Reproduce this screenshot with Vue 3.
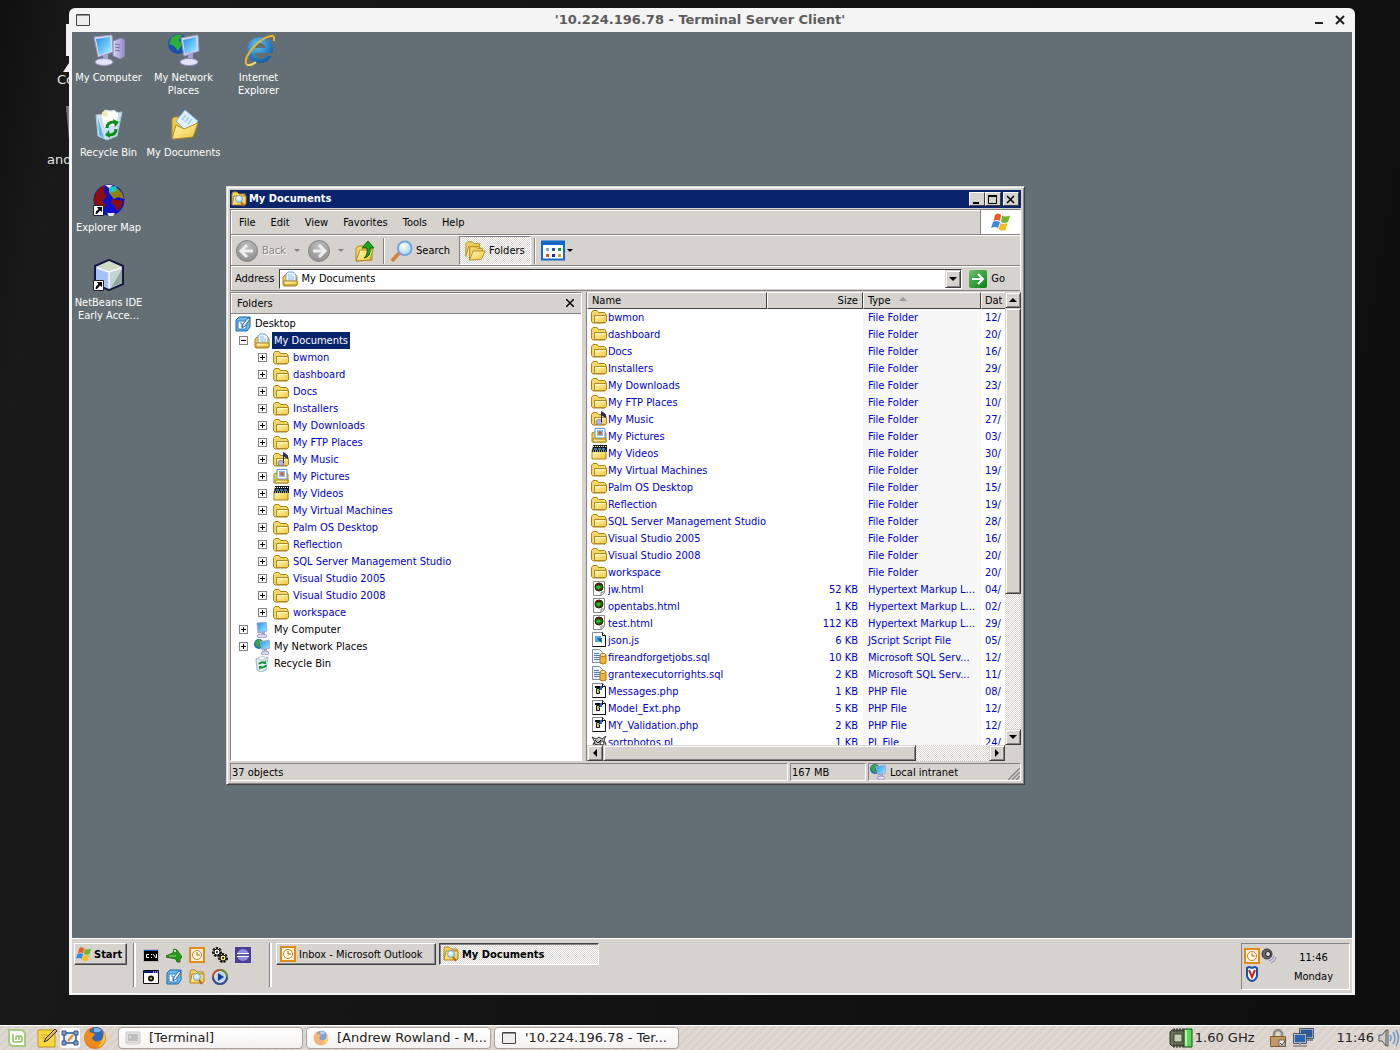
<template>
  <div class="screen">
    <svg class="sprite" aria-hidden="true">
      <defs>
        <linearGradient id="gold" x1="0" y1="0" x2="1" y2="1">
          <stop offset="0" stop-color="#fff9b8" />
          <stop offset="1" stop-color="#f0c53a" />
        </linearGradient>
        <linearGradient id="glass" x1="0" y1="0" x2="1" y2="1">
          <stop offset="0" stop-color="#1f8fe8" />
          <stop offset="1" stop-color="#a9f0ff" />
        </linearGradient>
        <linearGradient id="lilac" x1="0" y1="0" x2="1" y2="0">
          <stop offset="0" stop-color="#d9d6f2" />
          <stop offset="1" stop-color="#8d88c4" />
        </linearGradient>
        <radialGradient id="lens" cx="0.4" cy="0.35" r="0.7">
          <stop offset="0" stop-color="#ffffff" />
          <stop offset="1" stop-color="#9fd0f5" />
        </radialGradient>
        <radialGradient id="ieblue" cx="0.4" cy="0.3" r="0.8">
          <stop offset="0" stop-color="#5cc6f5" />
          <stop offset="1" stop-color="#0b4f9c" />
        </radialGradient>
        <radialGradient id="grayball" cx="0.5" cy="0.3" r="0.7">
          <stop offset="0" stop-color="#c2c2c2" />
          <stop offset="1" stop-color="#8e8e8e" />
        </radialGradient>
        <linearGradient id="goGreen" x1="0" y1="0" x2="1" y2="1">
          <stop offset="0" stop-color="#6cc46a" />
          <stop offset="1" stop-color="#0b7f16" />
        </linearGradient>
      </defs>

      <symbol id="i-folder" viewBox="0 0 16 16">
        <path d="M0.500 12.500v-9l1.500-2h4l1.500 2h6l1.500 1.500v8l-1 1H2z" fill="#f3d767" stroke="#a98316" />
        <path d="M3.500 13.500v-7h12v6l-1 1z" fill="url(#gold)" stroke="#b08a1e" />
        <path d="M5 7.500h9" stroke="#fffbd0" />
      </symbol>
      <symbol id="i-docs" viewBox="0 0 16 16">
        <path d="M1 14V6l2-2h11l1 2v8l-1 1H2z" fill="#f0cc54" stroke="#a98316" />
        <path d="M4 10V3l2-2h5l3 3v6z" fill="#eef7ff" stroke="#6da5d6" />
        <path d="M6 4h4M6 6h6M6 8h6" stroke="#8fc0ea" />
        <path d="M2 10h13v4H2z" fill="url(#gold)" stroke="#b08a1e" />
      </symbol>
      <symbol id="i-music" viewBox="0 0 16 16">
        <use href="#i-folder" />
        <ellipse cx="8" cy="11" rx="3" ry="2.5" fill="#b9b3dd" stroke="#8a85b8" />
        <path d="M10.500 11V0.500l4 3v3l-4-3" fill="#2b2b66" stroke="#2b2b66" />
      </symbol>
      <symbol id="i-pictures" viewBox="0 0 16 16">
        <path d="M1 14V5l2-1h11l1 1v9z" fill="#f0cc54" stroke="#a98316" />
        <path d="M4 0.500h10V10H4z" fill="#fff" stroke="#5f97c2" />
        <path d="M6 2h6v6H6z" fill="#7fc3ef" />
        <circle cx="9" cy="5" r="2" fill="#d9613a" />
        <path d="M2 11h13v3H2z" fill="url(#gold)" stroke="#b08a1e" />
      </symbol>
      <symbol id="i-videos" viewBox="0 0 16 16">
        <path d="M1 5h14v9H1z" fill="url(#gold)" stroke="#a98316" />
        <path d="M2 0h14v7H1z" fill="#15181c" />
        <path d="M2 1.500h13M2 6h13" stroke="#fff" stroke-dasharray="1 1" />
        <path d="M3 3h3v2H3zM7 3h3v2H7zM11 3h3v2h-3z" fill="#3f7c9c" />
      </symbol>
      <symbol id="i-desktop" viewBox="0 0 16 16">
        <path d="M1 4l3-3h11v10l-3 4H1z" fill="#6db7ee" stroke="#1a67ab" />
        <path d="M3 5h8v8H3z" fill="#fff" stroke="#2b7cc1" />
        <path d="M5 7h2v4" stroke="#2b7cc1" fill="none" />
        <path d="M7 12l1-4 5-6 2 1-5 7z" fill="#f3f8fc" stroke="#2368a2" />
        <path d="M14 6l2-1v3z" fill="#e28b2e" />
      </symbol>
      <symbol id="i-pc" viewBox="0 0 16 16">
        <path d="M3 1l9-1 1 9-9 2z" fill="url(#glass)" stroke="#a4a7c8" />
        <path d="M7 10l4-1v3l-3 1z" fill="#a9a5d2" />
        <ellipse cx="8" cy="14" rx="5" ry="2" fill="#dcdaf0" stroke="#9a97c4" />
      </symbol>
      <symbol id="i-net" viewBox="0 0 16 16">
        <circle cx="5" cy="5" r="5" fill="#1b6fc2" />
        <path d="M1 3l4-3 3 2-3 3 1 4-4-2z" fill="#37a93b" />
        <path d="M6 3l9-2 1 8-8 2z" fill="url(#glass)" stroke="#a4a7c8" />
        <path d="M10 10l3-1v3h-3z" fill="#a9a5d2" />
        <ellipse cx="11" cy="14" rx="4" ry="2" fill="#dcdaf0" stroke="#9a97c4" />
      </symbol>
      <symbol id="i-bin" viewBox="0 0 16 16">
        <path d="M2 3l12-2-2 13-5 2-4-2z" fill="#dcecf4" stroke="#9cb8c8" />
        <path d="M4 2l4-2 5 2-6 2z" fill="#fff" stroke="#b9c8d0" />
        <path d="M5 8a4 3 0 0 1 6-1M12 9a4 3 0 0 1-6 2" stroke="#17962a" stroke-width="2" fill="none" />
        <path d="M12 4v4H9zM5 14v-4h3z" fill="#17962a" />
      </symbol>
      <symbol id="i-html" viewBox="0 0 16 16">
        <path d="M2.500 0.500h11v11l-3 3h-8z" fill="#fff" stroke="#888" />
        <path d="M13 11h-3v4" fill="#ddd" stroke="#888" />
        <circle cx="8" cy="6" r="4" fill="#0d7a12" stroke="#3a1208" />
        <path d="M6 3h5L7 6zM8 8l3-1-1 2z" fill="#6b0f0a" />
        <path d="M5 6l3-2 2 3-3 1z" fill="#2fc026" />
      </symbol>
      <symbol id="i-js" viewBox="0 0 16 16">
        <path d="M1.500 0.500h10l3 3v11h-13z" fill="#fff" stroke="#888" />
        <path d="M11.500 0.500v3h3v11h-13" fill="none" stroke="#111" />
        <path d="M4 4h6v6H4z" fill="#56a9dd" />
        <path d="M6 6h5v5L8 9z" fill="#1f6db0" />
      </symbol>
      <symbol id="i-sql" viewBox="0 0 16 16">
        <path d="M1.500 0.500h7l3 3v10h-10z" fill="#eef3fb" stroke="#7a8ba8" />
        <path d="M3 4.500h5M3 6.500h6M3 8.500h6M3 10.500h6" stroke="#5878b4" />
        <path d="M9 6v8q3 2 6 0V6z" fill="#f2b632" stroke="#a87a18" />
        <ellipse cx="12" cy="6" rx="3" ry="1.500" fill="#fff0b8" stroke="#a87a18" />
      </symbol>
      <symbol id="i-php" viewBox="0 0 16 16">
        <path d="M1.500 0.500h10l3 3v11h-13z" fill="#fff" stroke="#888" />
        <path d="M11.500 0.500v3h3v11h-13" fill="none" stroke="#111" />
        <path d="M4 3h8v2H4z" fill="#111" />
        <path d="M9 3h2v4H9z" fill="#2a62e0" />
        <path d="M5.500 5.500h3v5h-3z" fill="#e9c94a" stroke="#111" />
        <path d="M7 7h2v1H7z" fill="#15a6b8" />
      </symbol>
      <symbol id="i-pl" viewBox="0 0 16 16">
        <path d="M1 3l4 2 3-2 3 2 4-3-2 4 2 4-2 5H3L1 12l3-4z" fill="#c9c9c9" stroke="#333" />
        <path d="M4 6l3 3 3-3M5 11h6M2 9l4 2" stroke="#111" fill="none" />
        <circle cx="11" cy="9" r="2" fill="#fff" stroke="#222" />
      </symbol>
      <symbol id="i-searchfolder" viewBox="0 0 16 16">
        <path d="M1 13V3l1-2h4l2 2h6v3" fill="#f3d767" stroke="#b5831a" />
        <path d="M1 14l2-9h12v8l-2 1z" fill="url(#gold)" stroke="#b5831a" />
        <circle cx="8" cy="8" r="3.500" fill="url(#lens)" stroke="#7da7c9" />
        <path d="M10 11l3 4" stroke="#b5651c" stroke-width="2" />
      </symbol>
      <symbol id="i-flag" viewBox="0 0 20 20">
        <path d="M4 3q3-3 6 0L9 9Q6 7 2.500 9z" fill="#ec5a24" />
        <path d="M11 3.500q3 2 8 0L17 10q-4 2-7 0z" fill="#6fb52c" />
        <path d="M2 10q3-2 7 0L7 16q-3-2-7 0z" fill="#3f86e0" />
        <path d="M9.500 11q3 2 7 0l-2 7q-4 2-7-1z" fill="#f8bd1d" />
      </symbol>
      <symbol id="i-clock" viewBox="0 0 16 16">
        <path d="M1 1h14v14H1z" fill="#fdf3dc" stroke="#e08c1a" stroke-width="2" />
        <circle cx="8" cy="8" r="4.500" fill="#fff8e6" stroke="#c98220" />
        <path d="M8 5v3h3" fill="none" stroke="#b0680c" />
      </symbol>
      <symbol id="i-cmd" viewBox="0 0 16 16">
        <path d="M0.500 2.500h15v12h-15z" fill="#000" stroke="#b8b8b8" />
        <path d="M1 3h14v1H1z" fill="#2458c8" />
        <path d="M6 7.500H3.500v3H6M8.500 7v1M8.500 10v1M10 7l3 4M13.500 7v4" stroke="#fff" fill="none" />
      </symbol>
      <symbol id="i-croc" viewBox="0 0 16 16">
        <path d="M0 9l7-3 1-4 3 1 2 3 3 4-2 2v3h-3l-1-3-5-1-5-1z" fill="#1f9a1d" stroke="#2c6a14" />
        <circle cx="9" cy="4" r="1" fill="#fff" />
        <path d="M3 9h7" stroke="#9fd070" />
      </symbol>
      <symbol id="i-gears" viewBox="0 0 16 16">
        <circle cx="5" cy="5" r="3.500" fill="#fff" stroke="#111" stroke-width="3" stroke-dasharray="2 1" />
        <circle cx="11" cy="11" r="3.500" fill="#f2ef6a" stroke="#111" stroke-width="3" stroke-dasharray="2 1" />
        <circle cx="5" cy="5" r="3" fill="#fff" stroke="#111" />
        <circle cx="11" cy="11" r="3" fill="#f2ef6a" stroke="#111" />
        <circle cx="5" cy="5" r="1" />
        <circle cx="11" cy="11" r="1" />
      </symbol>
      <symbol id="i-eclipse" viewBox="0 0 16 16">
        <path d="M0 0h16v16H0z" fill="#4a3c98" />
        <circle cx="8" cy="8" r="6" fill="#8f8fd6" />
        <path d="M2 6.500h12M2 9.500h12" stroke="#fff" />
        <path d="M2 8h12" stroke="#35287c" />
      </symbol>
      <symbol id="i-svcs" viewBox="0 0 16 16">
        <path d="M0.500 1.500h15v13h-15z" fill="#fff" stroke="#111" />
        <path d="M1 2h14v2H1z" fill="#0a1a80" />
        <path d="M10 3h1M12 3h1M14 3h1" stroke="#fff" />
        <circle cx="8" cy="9.500" r="2" fill="#f0e23a" stroke="#111" stroke-width="2" />
      </symbol>
      <symbol id="i-media" viewBox="0 0 16 16">
        <circle cx="8" cy="8" r="7" fill="#e8eef8" stroke="#b24a2c" stroke-width="2" />
        <path d="M8 1a7 7 0 0 1 7 7" fill="none" stroke="#5c9a35" stroke-width="2" />
        <path d="M15 8a7 7 0 0 1-14 0" fill="none" stroke="#27549c" stroke-width="2" />
        <circle cx="8" cy="8" r="5" fill="#b9d4f4" />
        <path d="M6 4l6 4-6 4z" fill="#123c9c" />
      </symbol>
      <symbol id="i-speaker" viewBox="0 0 16 16">
        <circle cx="6" cy="6" r="5" fill="#666" stroke="#333" />
        <circle cx="7" cy="6" r="2.500" fill="#ddd" stroke="#222" />
        <path d="M8 13q4-1 5-5M10 15q5-2 5-6" stroke="#8c86d8" fill="none" />
      </symbol>
      <symbol id="i-shield" viewBox="0 0 16 16">
        <path d="M3 2l2-1 3 1 3-1 2 1v8q-1 4-5 5-4-1-5-5z" fill="#fff" stroke="#1c4fa8" stroke-width="2" />
        <path d="M5 4l3 7 3-7" fill="none" stroke="#cc1f1f" stroke-width="2" />
      </symbol>
      <symbol id="i-firefox" viewBox="0 0 22 22">
        <circle cx="11" cy="11" r="10" fill="#e8751a" />
        <circle cx="12" cy="8" r="7" fill="#3467b4" />
        <path d="M10 2q4-1 7 2-3 3-7 1z" fill="#7fb8ea" />
        <path d="M1 9q1-4 4-7 0 3 2 4 3 0 4 2l-3 3q2 4 6 3 3-1 5-3 0 6-6 9-9 0-12-8z" fill="#ef8a1d" />
        <path d="M19 5q3 6 0 11-2 3-6 4 6-6 6-15z" fill="#f7c832" />
      </symbol>
      <symbol id="i-window" viewBox="0 0 16 14">
        <path d="M1.500 1.500h13v11h-13z" fill="#eee" stroke="#444" />
        <path d="M2 2.500h12" stroke="#8a8f94" />
      </symbol>
      <symbol id="i-term" viewBox="0 0 16 16">
        <path d="M1 2h14v11H1z" fill="#d4d4d4" stroke="#a9a9a9" />
        <path d="M3 4h10v7H3z" fill="#9a9a9a" />
        <path d="M4 6l2 1-2 1M2 14.500h12" fill="none" stroke="#d5d5d5" />
      </symbol>
      <symbol id="i-mint" viewBox="0 0 20 20">
        <path d="M2 2h11q5 0 5 5v11H7q-5 0-5-5z" fill="#fff" stroke="#a5cc7c" stroke-width="2" />
        <path d="M6 6v6q0 2 2 2h5q2 0 2-2V9q0-1-1.500-1T12 9v3M12 9q0-1-1.500-1T9 9v3" fill="none" stroke="#8dbf5c" stroke-width="1.500" />
      </symbol>
      <symbol id="i-note" viewBox="0 0 20 20">
        <path d="M1 2h17v17H1z" fill="#f6d83a" stroke="#bb9a16" />
        <path d="M4 7h7M4 10h5" stroke="#c8aa2a" />
        <path d="M7 14l2-4 9-9 2 2-9 9z" fill="#e7b06a" stroke="#333" />
      </symbol>
      <symbol id="i-showdesk" viewBox="0 0 20 20">
        <path d="M4 5h12v10H4z" fill="#eee" stroke="#2f5687" stroke-width="1.500" />
        <path d="M2 3h4v4H2zM14 3h4v4h-4zM2 13h4v4H2zM14 13h4v4h-4z" fill="#7ba0cf" stroke="#2f5687" />
        <path d="M8 13l5-6" stroke="#d98f32" stroke-width="2" />
      </symbol>

      <symbol id="b-pc" viewBox="0 0 32 32">
        <path d="M20 7l8-3 4 2v16l-5 3-7-3z" fill="url(#lilac)" stroke="#8581b8" />
        <path d="M22 10l5 1M22 13l5 1M22 16l5 1" stroke="#6f6aa8" />
        <path d="M1 3l18-2 1 17-15 5z" fill="#d8d8ee" stroke="#9a9ac4" />
        <path d="M3 5l14-2 1 14-12 4z" fill="url(#glass)" />
        <path d="M10 21l5-2v6h-5z" fill="#a5a1d0" />
        <ellipse cx="11" cy="28" rx="9" ry="3.500" fill="#e4e2f6" stroke="#9793c4" />
      </symbol>
      <symbol id="b-net" viewBox="0 0 32 32">
        <circle cx="10" cy="10" r="10" fill="#1550b0" />
        <path d="M3 4q5-5 11-3l-3 5 3 5-4 6-4-5-5-2z" fill="#2fae35" />
        <path d="M13 4l17-3 1 16-15 5z" fill="#d8d8ee" stroke="#9a9ac4" />
        <path d="M15 6l13-3 1 13-12 4z" fill="url(#glass)" />
        <path d="M20 20l5-2v6h-5z" fill="#a5a1d0" />
        <ellipse cx="21" cy="28" rx="9" ry="3.500" fill="#e4e2f6" stroke="#9793c4" />
      </symbol>
      <symbol id="b-ie" viewBox="0 0 32 32">
        <circle cx="17" cy="16" r="13" fill="url(#ieblue)" />
        <path d="M12 14q1-5 5-5t6 5z" fill="#636f74" />
        <path d="M12 19h19v3h-7q-2 3-6 3-5 0-6-6z" fill="#636f74" />
        <path d="M4 31q-4-5 5-16T28 2q4-1 3 5" fill="none" stroke="#e9b62c" stroke-width="2" />
        <path d="M4 31q4 1 9-3" fill="none" stroke="#f5dc6a" stroke-width="2" />
      </symbol>
      <symbol id="b-bin" viewBox="0 0 32 32">
        <path d="M3 6l26-3-5 24-10 4-9-4z" fill="#c9e2f2" stroke="#a7c3d6" />
        <path d="M8 7l4-6 6 1 3-1 5 4-3 12-12 2z" fill="#fdfdfd" stroke="#cfd6da" />
        <path d="M9 3l5-2 1 6-5 1z" fill="#f6edb2" />
        <path d="M5 9l6 20-5-3z" fill="#5fb3ee" />
        <path d="M14 19q0-6 7-6M23 20q0 6-7 6" fill="none" stroke="#0e8b1e" stroke-width="3" />
        <path d="M20 10l6 3-4 5zM17 29l-5-3 4-5z" fill="#0e8b1e" />
      </symbol>
      <symbol id="b-docs" viewBox="0 0 32 32">
        <path d="M4 28V10l2-2h6l2 3h12v4z" fill="#f0c850" stroke="#b88c22" />
        <path d="M8 12L17 1l13 11-9 13z" fill="#dff1fd" stroke="#7fb2dc" />
        <path d="M14 11l4-5M17 13l4-5M20 15l4-5" stroke="#a5d0f0" stroke-width="2" />
        <path d="M4 30l4-14 8 4 14-6-5 14-19 2z" fill="url(#gold)" stroke="#b88c22" />
      </symbol>
      <symbol id="b-map" viewBox="0 0 32 32">
        <circle cx="16" cy="16" r="15.500" fill="#1010c8" />
        <path d="M3 8q4-6 9-6l-1 6 3 4-5 5 4 4-4 6Q-1 22 1 13z" fill="#8c0d10" />
        <path d="M16 3l8 1q6 4 7 11l-6-2-4 2-5-6z" fill="#8f8212" />
        <path d="M19 15l11 2q-1 7-6 10l-2-5-4-3z" fill="#8c0d10" />
        <path d="M16 3l7-1 1 4-5 3-3-2z" fill="#22c9b0" />
        <path d="M12 1h8l-4 3zM14 29h8l-2 3h-4z" fill="#e8e8f8" />
      </symbol>
      <symbol id="b-cube" viewBox="0 0 32 32">
        <path d="M16 1l14 6v18l-14 6L2 25V7z" fill="#b7cdf0" stroke="#15173d" stroke-width="2" />
        <path d="M16 2l13 6-13 5L3 8z" fill="#cfdcc4" />
        <path d="M3 8l13 5v17L3 24z" fill="#a6c2f4" />
        <path d="M16 13l13-5v16l-13 6z" fill="#c3d3d8" />
        <path d="M18 29L29 10v14z" fill="#93a89f" />
        <path d="M16 13v16M4 9l12 4 12-4" stroke="#f4f8ff" stroke-width="1.500" fill="none" />
      </symbol>
      <symbol id="i-shortcut" viewBox="0 0 11 11">
        <path d="M0.500 0.500h10v10h-10z" fill="#fff" stroke="#222" />
        <path d="M4 2h5v5L7 5.500 4 9 2.500 9 3 6.500 5.500 4z" fill="#000" />
      </symbol>
    </svg>

    <main class="host-desktop">
      <div class="host-icon">
        <svg viewBox="0 0 30 48"><path d="M3 0h27v32H3zM8 36h22v12H0z" fill="#eee" /></svg>
        <span>Co</span>
      </div>
      <div class="host-icon second">
        <svg viewBox="0 0 30 48"><path d="M3 2h27v34H6z" fill="#777" /></svg>
        <span>and</span>
      </div>

      <section class="remote">
        <header class="remote-title">
          <svg class="win-icon"><use href="#i-window" /></svg>
          <h1>'10.224.196.78 - Terminal Server Client'</h1>
          <button class="wm-btn" aria-label="Minimize"><svg viewBox="0 0 10 10"><path d="M1 8h8" stroke="#222" stroke-width="2" /></svg></button>
          <button class="wm-btn" aria-label="Close"><svg viewBox="0 0 10 10"><path d="M1 1l8 8M9 1l-8 8" stroke="#222" stroke-width="2" /></svg></button>
        </header>

        <div class="remote-desktop">
          <div v-for="(row, r) in desktopRows" :key="r" class="shortcut-row">
            <button v-for="item in row" :key="item.label" class="shortcut">
              <span class="shortcut-icon">
                <svg><use :href="'#' + item.icon" /></svg>
                <svg v-if="item.link" class="overlay"><use href="#i-shortcut" /></svg>
              </span>
              <span>{{ item.label }}</span>
            </button>
          </div>

          <section class="explorer">
            <header class="ex-title">
              <svg class="ic"><use href="#i-searchfolder" /></svg>
              <h2>My Documents</h2>
              <button class="cap-btn" aria-label="Minimize"><svg viewBox="0 0 10 9"><path d="M1 8h6" stroke="#000" stroke-width="2" /></svg></button>
              <button class="cap-btn" aria-label="Maximize"><svg viewBox="0 0 10 9"><path d="M0.500 0v8.500h8V0" stroke="#000" fill="none" /><path d="M0 1h9" stroke="#000" stroke-width="2" /></svg></button>
              <button class="cap-btn close" aria-label="Close"><svg viewBox="0 0 10 9"><path d="M1 1l7 7M8 1L1 8" stroke="#000" stroke-width="1.500" /></svg></button>
            </header>

            <div class="bars">
              <nav class="menu">
                <button v-for="m in menus" :key="m">{{ m }}</button>
                <span class="throbber"><svg><use href="#i-flag" /></svg></span>
              </nav>

              <div class="tools">
                <button class="tool off">
                  <svg class="big" viewBox="0 0 22 22"><circle cx="11" cy="11" r="10.500" fill="url(#grayball)" stroke="#868686" /><path d="M17 11H6M11 5l-6 6 6 6" fill="none" stroke="#eee" stroke-width="3" /></svg>
                  Back
                </button>
                <i class="caret off"></i>
                <button class="tool off fwd" aria-label="Forward">
                  <svg class="big" viewBox="0 0 22 22"><circle cx="11" cy="11" r="10.500" fill="url(#grayball)" stroke="#868686" /><path d="M5 11h11M11 5l6 6-6 6" fill="none" stroke="#eee" stroke-width="3" /></svg>
                </button>
                <i class="caret off"></i>
                <button class="tool up" aria-label="Up">
                  <svg class="big" viewBox="0 0 22 22"><path d="M1 21V8l3-2h5l2 2h6v12z" fill="#f3d767" stroke="#b08a1e" /><path d="M1 21l4-11h13l-3 10z" fill="url(#gold)" stroke="#b08a1e" /><path d="M9 18q4-3 3-10H7l6-7 6 7h-4q1 9-6 10z" fill="#22a322" stroke="#0c6a10" /></svg>
                </button>
                <i class="sep"></i>
                <button class="tool search">
                  <svg class="big wide" viewBox="0 0 24 24"><path d="M1 23l9-10" stroke="#d9803a" stroke-width="4" /><circle cx="15" cy="9" r="7.500" fill="url(#lens)" stroke="#6c9fdc" stroke-width="2" /></svg>
                  Search
                </button>
                <button class="tool pressed">
                  <svg class="big wide" viewBox="0 0 24 24"><path d="M2 18V4l2-2h5l2 2h6v3" fill="#f0d060" stroke="#b08a1e" /><path d="M2 18l3-11h12v4" fill="#ffe98a" stroke="#b08a1e" /><path d="M6 22V8l2-1h4l2 2h6v4" fill="#f0d060" stroke="#b08a1e" /><path d="M6 22l4-10h13l-4 9z" fill="url(#gold)" stroke="#b08a1e" /></svg>
                  Folders
                </button>
                <i class="sep"></i>
                <button class="tool views" aria-label="Views">
                  <svg class="big wide" viewBox="0 0 24 22"><path d="M1 1.500h22v18H1z" fill="#fff" stroke="#1568c8" stroke-width="2" /><path d="M1 2h22v3H1z" fill="#1568c8" /><path d="M5 8h3v3H5z" fill="#8aa2e0" /><path d="M11 8h3v3h-3z" fill="#3454b4" /><path d="M17 8h3v3h-3z" fill="#1f9a3c" /><path d="M5 14h3v3H5z" fill="#d9543a" /><path d="M11 14h3v3h-3z" fill="#1b2f8c" /><path d="M17 14h3v3h-3z" fill="#c9a12a" /></svg>
                </button>
                <i class="caret"></i>
              </div>

              <div class="address">
                <label for="address">Address</label>
                <div class="addr-box">
                  <svg class="ic"><use href="#i-docs" /></svg>
                  <input id="address" type="text" v-model="address" />
                  <button class="sb-btn" aria-label="Show addresses"><i class="arrow down"></i></button>
                </div>
                <button class="go">
                  <svg viewBox="0 0 18 18"><rect width="18" height="18" rx="2" fill="url(#goGreen)" /><path d="M3 9h11M9 4l5 5-5 5" fill="none" stroke="#fff" stroke-width="2" /></svg>
                  Go
                </button>
              </div>
            </div>

            <div class="panes">
              <aside class="folders">
                <header>
                  <span>Folders</span>
                  <button aria-label="Close folders"><svg viewBox="0 0 8 8"><path d="M0 0l8 8M8 0L0 8" stroke="#000" stroke-width="1.500" /></svg></button>
                </header>
                <ul>
                  <li v-for="n in tree" :key="n.label" :class="'lv' + n.level">
                    <button v-if="n.sign" class="sign" :aria-label="n.sign === '+' ? 'Expand' : 'Collapse'">
                      <svg viewBox="0 0 9 9"><path d="M2 4.500h5" stroke="#000" /><path v-if="n.sign === '+'" d="M4.500 2v5" stroke="#000" /></svg>
                    </button>
                    <svg class="ic"><use :href="'#' + n.icon" /></svg>
                    <a href="#" :class="{ blue: n.level === 2, selected: n.selected }">{{ n.label }}</a>
                  </li>
                </ul>
              </aside>

              <div class="listing">
                <div class="list-view">
                  <table>
                    <thead>
                      <tr>
                        <th class="c-name">Name</th>
                        <th class="c-size">Size</th>
                        <th class="c-type">Type<i class="arrow up sorted"></i></th>
                        <th>Dat</th>
                      </tr>
                    </thead>
                    <tbody>
                      <tr v-for="f in files" :key="f.name">
                        <td><span class="file"><svg class="ic"><use :href="'#' + f.icon" /></svg><a href="#">{{ f.name }}</a></span></td>
                        <td class="size">{{ f.size }}</td>
                        <td class="type">{{ f.type }}</td>
                        <td>{{ f.date }}</td>
                      </tr>
                    </tbody>
                  </table>
                </div>
                <div class="scroll vert">
                  <button class="sb-btn" aria-label="Scroll up"><i class="arrow up"></i></button>
                  <div class="track"><div class="thumb"></div></div>
                  <button class="sb-btn" aria-label="Scroll down"><i class="arrow down"></i></button>
                </div>
                <div class="scroll horz">
                  <button class="sb-btn" aria-label="Scroll left"><i class="arrow left"></i></button>
                  <div class="track"><div class="thumb"></div></div>
                  <button class="sb-btn" aria-label="Scroll right"><i class="arrow right"></i></button>
                </div>
              </div>
            </div>

            <footer class="status">
              <span class="cell grow">37 objects</span>
              <span class="cell mb">167 MB</span>
              <span class="cell zone">
                <svg class="ic"><use href="#i-net" /></svg>Local intranet
                <svg class="grip" viewBox="0 0 12 12"><path d="M0 12L12 0M4 12l8-8M8 12l4-4" stroke="#868686" stroke-width="1.500" /></svg>
              </span>
            </footer>
          </section>
        </div>

        <footer class="taskbar">
          <button class="start"><svg><use href="#i-flag" /></svg>Start</button>
          <i class="divider"></i>
          <div class="quick">
            <button v-for="q in quick" :key="q" :aria-label="q"><svg class="ic"><use :href="'#i-' + q" /></svg></button>
          </div>
          <i class="divider"></i>
          <button class="task"><svg class="ic"><use href="#i-clock" /></svg>Inbox - Microsoft Outlook</button>
          <button class="task active"><svg class="ic"><use href="#i-searchfolder" /></svg>My Documents</button>
          <div class="tray">
            <div class="tray-icons">
              <svg class="ic"><use href="#i-clock" /></svg>
              <svg class="ic"><use href="#i-speaker" /></svg>
              <svg class="ic"><use href="#i-shield" /></svg>
            </div>
            <div class="clock"><span>11:46</span><span>Monday</span></div>
          </div>
        </footer>
      </section>
    </main>

    <footer class="panel">
      <div class="launchers">
        <button aria-label="Menu"><svg><use href="#i-mint" /></svg></button>
        <button aria-label="Notes"><svg><use href="#i-note" /></svg></button>
        <button class="lit" aria-label="Show desktop"><svg><use href="#i-showdesk" /></svg></button>
        <button aria-label="Firefox"><svg class="large"><use href="#i-firefox" /></svg></button>
      </div>
      <button v-for="t in hostTasks" :key="t.label" class="host-task" :class="{ minimized: t.minimized }">
        <svg><use :href="'#' + t.icon" /></svg>{{ t.label }}
      </button>
      <div class="applets">
        <svg class="cpu" viewBox="0 0 24 20">
          <path d="M3 2h13v16H3L1 16V4z" fill="#6a6f58" stroke="#2d3024" />
          <path d="M5 0v4M8 0v4M11 0v4M14 0v4M5 16v4M8 16v4M11 16v4M14 16v4" stroke="#2d3024" />
          <path d="M5 6h8v8H5z" fill="#c9cdb8" stroke="#3c4030" />
          <path d="M15 1h8v18h-8z" fill="#5fd45a" stroke="#1c4a1a" />
          <path d="M17 2v16" stroke="#b8f5b0" stroke-width="2" />
        </svg>
        <span class="ghz">1.60 GHz</span>
        <svg class="lock" viewBox="0 0 18 20">
          <path d="M5 9V6a4 4 0 0 1 8 0v3" fill="none" stroke="#8f8a84" stroke-width="2.500" />
          <path d="M1.500 8.500h15v10h-15z" fill="#c59a62" stroke="#805a2c" />
          <path d="M10 12h6v6h-6z" fill="#eee" stroke="#666" /><path d="M11 15l2 2 3-4" fill="none" stroke="#333" />
        </svg>
        <svg class="nets" viewBox="0 0 22 20">
          <path d="M8 1h13v9H8z" fill="#2a5a9e" stroke="#e8e8e8" /><path d="M7.500 0.500h14v10h-14z" fill="none" stroke="#555" /><path d="M13 12h8" stroke="#888" stroke-width="2" />
          <path d="M2 6h12v9H2z" fill="#2f64ac" stroke="#fff" /><path d="M1.500 5.500h13v10h-13z" fill="none" stroke="#555" /><path d="M8 15v2M1 18h14" stroke="#999" stroke-width="2" />
        </svg>
        <span class="host-clock">11:46</span>
        <svg class="vol" viewBox="0 0 22 20">
          <path d="M1 7h3l4-5h2v16H8l-4-5H1z" fill="#ccc" stroke="#555" />
          <path d="M8 2v16" stroke="#555" />
          <path d="M12 7q2 3 0 6M15 4q4 6 0 12M18 2q5 8 0 16" fill="none" stroke="#6e9cc8" stroke-width="1.500" />
        </svg>
      </div>
    </footer>
  </div>
</template>

<script setup>
  import { ref } from 'vue';

  const address = ref('My Documents');

  const menus = ['File', 'Edit', 'View', 'Favorites', 'Tools', 'Help'];

  const desktopRows = [
    [
      { label: 'My Computer', icon: 'b-pc' },
      { label: 'My Network Places', icon: 'b-net' },
      { label: 'Internet Explorer', icon: 'b-ie' }
    ],
    [
      { label: 'Recycle Bin', icon: 'b-bin' },
      { label: 'My Documents', icon: 'b-docs' }
    ],
    [{ label: 'Explorer Map', icon: 'b-map', link: true }],
    [{ label: 'NetBeans IDE Early Acce...', icon: 'b-cube', link: true }]
  ];

  // Folders shown both in the tree and in the list, with their dates
  const folders = [
    ['bwmon', '12/'],
    ['dashboard', '20/'],
    ['Docs', '16/'],
    ['Installers', '29/'],
    ['My Downloads', '23/'],
    ['My FTP Places', '10/'],
    ['My Music', '27/', 'i-music'],
    ['My Pictures', '03/', 'i-pictures'],
    ['My Videos', '30/', 'i-videos'],
    ['My Virtual Machines', '19/'],
    ['Palm OS Desktop', '15/'],
    ['Reflection', '19/'],
    ['SQL Server Management Studio', '28/'],
    ['Visual Studio 2005', '16/'],
    ['Visual Studio 2008', '20/'],
    ['workspace', '20/']
  ];

  const tree = [
    { label: 'Desktop', level: 0, icon: 'i-desktop' },
    { label: 'My Documents', level: 1, icon: 'i-docs', sign: '-', selected: true },
    ...folders.map(([label, , icon]) => ({ label, level: 2, icon: icon || 'i-folder', sign: '+' })),
    { label: 'My Computer', level: 1, icon: 'i-pc', sign: '+' },
    { label: 'My Network Places', level: 1, icon: 'i-net', sign: '+' },
    { label: 'Recycle Bin', level: '1 leaf', icon: 'i-bin' }
  ];

  const files = [
    ...folders.map(([name, date, icon]) => ({ name, date, icon: icon || 'i-folder', size: '', type: 'File Folder' })),
    { name: 'jw.html', size: '52 KB', type: 'Hypertext Markup L...', date: '04/', icon: 'i-html' },
    { name: 'opentabs.html', size: '1 KB', type: 'Hypertext Markup L...', date: '02/', icon: 'i-html' },
    { name: 'test.html', size: '112 KB', type: 'Hypertext Markup L...', date: '29/', icon: 'i-html' },
    { name: 'json.js', size: '6 KB', type: 'JScript Script File', date: '05/', icon: 'i-js' },
    { name: 'fireandforgetjobs.sql', size: '10 KB', type: 'Microsoft SQL Serv...', date: '12/', icon: 'i-sql' },
    { name: 'grantexecutorrights.sql', size: '2 KB', type: 'Microsoft SQL Serv...', date: '11/', icon: 'i-sql' },
    { name: 'Messages.php', size: '1 KB', type: 'PHP File', date: '08/', icon: 'i-php' },
    { name: 'Model_Ext.php', size: '5 KB', type: 'PHP File', date: '12/', icon: 'i-php' },
    { name: 'MY_Validation.php', size: '2 KB', type: 'PHP File', date: '12/', icon: 'i-php' },
    { name: 'sortphotos.pl', size: '1 KB', type: 'PL File', date: '24/', icon: 'i-pl' }
  ];

  const quick = ['cmd', 'croc', 'clock', 'gears', 'eclipse', 'svcs', 'desktop', 'searchfolder', 'media'];

  const hostTasks = [
    { label: '[Terminal]', icon: 'i-term', minimized: true },
    { label: '[Andrew Rowland - M...', icon: 'i-firefox', minimized: true },
    { label: "'10.224.196.78 - Ter...", icon: 'i-window' }
  ];
</script>

<style>
  html, body {
    margin: 0;
    height: 100%;
    overflow: hidden;
    background: #141414;
  }
</style>

<style scoped>
  .screen {
    height: 100vh;
    display: flex;
    flex-direction: column;
    background: linear-gradient(100deg, #101010, #191919 5%, #131313 50%, #0e0e0e);
    font: 11px/13px "DejaVu Sans Condensed", "DejaVu Sans", sans-serif;
    color: #000;
  }

  .sprite {
    position: absolute;
    width: 0;
    height: 0;
  }

  button {
    font: inherit;
    color: inherit;
    background: none;
    border: 0;
    padding: 0;
    margin: 0;
    white-space: nowrap;
  }

  a {
    color: inherit;
    text-decoration: none;
  }

  svg {
    display: block;
    flex: none;
  }

  .ic {
    width: 16px;
    height: 16px;
  }

  /* --- Host desktop --- */
  .host-desktop {
    flex: 1;
    min-height: 0;
    position: relative;
  }

  .host-icon {
    position: absolute;
    left: 57px;
    top: 24px;
    color: #e6e6e6;
    font: 13px/16px "DejaVu Sans", sans-serif;
  }

  .host-icon svg {
    width: 30px;
    height: 48px;
    margin-left: 6px;
  }

  .host-icon.second {
    left: 47px;
    top: 104px;
  }

  .host-icon.second svg {
    margin-left: 16px;
  }

  .remote {
    position: absolute;
    inset: 8px 45px 30px 69px;
    display: flex;
    flex-direction: column;
    background: #f4f4f4;
    border-radius: 6px 6px 0 0;
    padding: 0 3px 2px;
  }

  .remote-title {
    flex: none;
    display: flex;
    align-items: center;
    height: 24px;
    gap: 2px;
    padding: 0 3px;
  }

  .win-icon {
    width: 16px;
    height: 14px;
  }

  .remote-title h1 {
    flex: 1;
    margin: 0;
    text-align: center;
    font: bold 13px/24px "DejaVu Sans", sans-serif;
    color: #5c5c5c;
  }

  .wm-btn {
    width: 19px;
    display: flex;
    justify-content: center;
  }

  .wm-btn svg {
    width: 10px;
    height: 10px;
  }

  .remote-desktop {
    flex: 1;
    min-height: 0;
    position: relative;
    background: #636f74;
  }

  .shortcut-row {
    display: flex;
    height: 75px;
    margin-left: -1px;
  }

  .shortcut {
    width: 75px;
    height: 75px;
    padding-top: 2px;
    display: flex;
    flex-direction: column;
    align-items: center;
    gap: 5px;
    color: #fff;
    white-space: normal;
  }

  .shortcut-icon {
    position: relative;
  }

  .shortcut-icon svg {
    width: 32px;
    height: 32px;
  }

  .shortcut-icon .overlay {
    position: absolute;
    left: 0;
    bottom: 0;
    width: 11px;
    height: 11px;
  }

  /* --- Explorer window --- */
  .explorer {
    position: absolute;
    inset: 154px 327px 153px 154px;
    display: flex;
    flex-direction: column;
    padding: 3px;
    background: #d6d3ce;
    border: 1px solid;
    border-color: #d6d3ce #404040 #404040 #d6d3ce;
    box-shadow: inset 1px 1px #fff, inset -1px -1px #848284;
  }

  .ex-title {
    flex: none;
    display: flex;
    align-items: center;
    height: 18px;
    padding: 0 2px 0 1px;
    background: #08246b;
    color: #fff;
  }

  .ex-title h2 {
    flex: 1;
    margin: 0 0 0 2px;
    font: bold 11px/18px "DejaVu Sans Condensed", sans-serif;
  }

  .cap-btn {
    width: 16px;
    height: 14px;
    display: flex;
    align-items: center;
    justify-content: center;
    background: #d6d3ce;
    border: 1px solid;
    border-color: #fff #404040 #404040 #fff;
    box-sizing: border-box;
  }

  .cap-btn.close {
    margin-left: 2px;
  }

  .cap-btn svg {
    width: 10px;
    height: 9px;
  }

  .bars {
    flex: none;
    margin-top: 1px;
    border: 1px solid #848284;
    border-bottom: 0;
    border-right-color: #fff;
    box-shadow: inset 1px 1px #fff;
  }

  .menu {
    display: flex;
    height: 24px;
    border-bottom: 1px solid #848284;
  }

  .menu button {
    padding: 0 7px 0 8px;
  }

  .throbber {
    margin-left: auto;
    width: 39px;
    display: flex;
    align-items: center;
    justify-content: center;
    background: #fff;
    border-left: 1px solid #848284;
  }

  .throbber svg {
    width: 20px;
    height: 20px;
  }

  .tools {
    display: flex;
    align-items: center;
    height: 29px;
    padding-left: 5px;
    border-top: 1px solid #fff;
    border-bottom: 1px solid #848284;
  }

  .tool {
    display: flex;
    align-items: center;
    gap: 4px;
  }

  .tool .big {
    width: 22px;
    height: 22px;
  }

  .tool .wide {
    width: 24px;
  }

  .tool.off {
    color: #848284;
    text-shadow: 1px 1px #fff;
  }

  .tool.up {
    margin-left: 11px;
  }

  .tool.fwd {
    margin-left: 8px;
  }

  .tool.search,
  .tool.pressed {
    gap: 2px;
  }

  .caret {
    margin-left: 8px;
    border: 3px solid transparent;
    border-top-color: #000;
    border-bottom: 0;
  }

  .caret.off {
    border-top-color: #848284;
  }

  .sep {
    height: 26px;
    margin: 0 5px 0 6px;
    border-left: 1px solid #848284;
    border-right: 1px solid #fff;
  }

  .tool.pressed {
    height: 29px;
    margin-left: 9px;
    padding: 0 5px 0 3px;
    box-sizing: border-box;
    border: 1px solid;
    border-color: #848284 #fff #fff #848284;
    background: repeating-conic-gradient(#fff 0 25%, #d6d3ce 0 50%) 0 0 / 2px 2px;
  }

  .pressed + .sep {
    margin-left: 3px;
  }

  .views + .caret {
    margin-left: 2px;
  }

  .address {
    display: flex;
    align-items: center;
    height: 23px;
    padding-left: 4px;
    border-top: 1px solid #fff;
    border-bottom: 1px solid #848284;
  }

  .addr-box {
    flex: 1;
    display: flex;
    align-items: center;
    height: 20px;
    margin-left: 5px;
    padding-left: 2px;
    box-sizing: border-box;
    background: #fff;
    border: 1px solid;
    border-color: #404040 #fff #fff #404040;
  }

  .addr-box input {
    flex: 1;
    min-width: 0;
    border: 0;
    padding: 0 3px;
    font: inherit;
    outline: 0;
  }

  .go {
    display: flex;
    align-items: center;
    gap: 4px;
    padding: 0 15px 0 7px;
  }

  .go svg {
    width: 18px;
    height: 18px;
  }

  /* --- Arrows and scrollbars --- */
  .arrow {
    border: 4px solid transparent;
  }

  .arrow.down {
    border-top-color: #000;
    border-bottom: 0;
  }

  .arrow.up {
    border-bottom-color: #000;
    border-top: 0;
  }

  .arrow.left {
    border-right-color: #000;
    border-left: 0;
  }

  .arrow.right {
    border-left-color: #000;
    border-right: 0;
  }

  .arrow.sorted {
    display: inline-block;
    margin: 0 0 3px 8px;
    border-bottom-color: #999;
  }

  .sb-btn,
  .thumb {
    background: #d6d3ce;
    border: 1px solid;
    border-color: #d6d3ce #404040 #404040 #d6d3ce;
    box-shadow: inset 1px 1px #fff, inset -1px -1px #848284;
    box-sizing: border-box;
  }

  .sb-btn {
    flex: none;
    width: 16px;
    height: 16px;
    display: flex;
    align-items: center;
    justify-content: center;
  }

  .addr-box .sb-btn {
    height: 18px;
  }

  .scroll {
    display: flex;
    min-width: 0;
    min-height: 0;
  }

  .scroll.vert {
    flex-direction: column;
  }

  .track {
    flex: 1;
    background: repeating-conic-gradient(#fff 0 25%, #d6d3ce 0 50%) 0 0 / 2px 2px;
  }

  .vert .thumb {
    height: 68%;
  }

  .horz .thumb {
    width: 81%;
    height: 16px;
  }

  /* --- Panes --- */
  .panes {
    flex: 1;
    min-height: 0;
    display: flex;
    gap: 4px;
    margin-top: 1px;
  }

  .folders {
    flex: none;
    width: calc(45% - 4px);
    box-sizing: border-box;
    display: flex;
    flex-direction: column;
    background: #fff;
    border: 1px solid;
    border-color: #848284 #fff #fff #848284;
    overflow: hidden;
  }

  .folders header {
    flex: none;
    display: flex;
    align-items: center;
    justify-content: space-between;
    height: 20px;
    padding: 0 7px 0 6px;
    background: #d6d3ce;
    border-bottom: 1px solid #848284;
    box-shadow: inset 1px 1px #fff;
  }

  .folders header svg {
    width: 8px;
    height: 8px;
  }

  .folders ul {
    margin: 0;
    padding: 1px 0 0;
    list-style: none;
  }

  .folders li {
    display: flex;
    align-items: center;
    gap: 2px;
    height: 17px;
    white-space: nowrap;
  }

  .folders li a {
    padding: 0 2px;
    line-height: 17px;
  }

  .lv0 {
    padding-left: 4px;
  }

  .lv1 {
    padding-left: 8px;
  }

  .lv1.leaf {
    padding-left: 23px;
  }

  .lv2 {
    padding-left: 27px;
  }

  .folders .blue {
    color: #0000c8;
  }

  .folders .selected {
    background: #08246b;
    color: #fff;
  }

  .sign {
    width: 9px;
    height: 9px;
    margin-right: 4px;
    box-sizing: border-box;
    background: #fff;
    border: 1px solid #848284;
  }

  .sign svg {
    width: 9px;
    height: 9px;
    margin: -1px;
  }

  .listing {
    flex: 1;
    min-width: 0;
    display: grid;
    grid-template: minmax(0, 1fr) 16px / minmax(0, 1fr) 16px;
    border-left: 1px solid #848284;
  }

  .list-view {
    overflow: hidden;
    background: #fff;
    color: #0000c8;
  }

  table {
    width: 100%;
    table-layout: fixed;
    border-spacing: 0;
  }

  th {
    height: 17px;
    padding: 0 4px;
    box-sizing: border-box;
    text-align: left;
    font-weight: normal;
    line-height: 14px;
    color: #000;
    white-space: nowrap;
    background: #d6d3ce;
    border: 1px solid;
    border-color: #fff #404040 #404040 #fff;
  }

  th:last-child {
    border-right: 0;
    padding: 0 0 0 3px;
  }

  .c-name {
    width: 180px;
  }

  .c-size {
    width: 96px;
    text-align: right;
  }

  .c-type {
    width: 118px;
  }

  td {
    height: 17px;
    padding: 0 5px;
    line-height: 17px;
    white-space: nowrap;
  }

  td:first-child {
    padding: 0 0 0 4px;
  }

  td:last-child {
    padding: 0 0 0 4px;
  }

  .file {
    display: flex;
    gap: 1px;
  }

  .size {
    text-align: right;
  }

  .type {
    background: #f7f7f7;
  }

  /* --- Status bar --- */
  .status {
    flex: none;
    display: flex;
    gap: 2px;
    height: 18px;
    margin-top: 2px;
  }

  .cell {
    display: flex;
    align-items: center;
    padding-left: 1px;
    box-sizing: border-box;
    border: 1px solid;
    border-color: #848284 #fff #fff #848284;
  }

  .grow {
    flex: 1;
  }

  .mb {
    width: 76px;
  }

  .zone {
    width: 153px;
    gap: 4px;
  }

  .grip {
    width: 12px;
    height: 12px;
    margin-left: auto;
    align-self: flex-end;
  }

  /* --- Remote taskbar --- */
  .taskbar {
    flex: none;
    display: flex;
    align-items: flex-start;
    height: 55px;
    box-sizing: border-box;
    padding: 4px 2px 0;
    background: #d6d3ce;
    border-top: 1px solid #fff;
  }

  .start,
  .task {
    display: flex;
    align-items: center;
    height: 22px;
    box-sizing: border-box;
    gap: 3px;
    padding: 0 3px;
    border: 1px solid;
    border-color: #fff #404040 #404040 #fff;
    box-shadow: inset -1px -1px #848284;
  }

  .start {
    width: 53px;
    gap: 2px;
    padding: 0 1px;
    font-weight: bold;
  }

  .start svg {
    width: 16px;
    height: 16px;
  }

  .divider {
    height: 44px;
    margin: 0 7px 0 6px;
    border-left: 1px solid #848284;
    border-right: 2px solid #fff;
  }

  .quick {
    width: 120px;
    display: flex;
    flex-wrap: wrap;
    gap: 6px 7px;
    padding-top: 4px;
  }

  .task {
    width: 160px;
    margin-right: 3px;
  }

  .divider + .task {
    margin-left: -3px;
  }

  .task.active {
    font-weight: bold;
    border-color: #404040 #fff #fff #404040;
    box-shadow: inset 1px 1px #848284;
    background: repeating-conic-gradient(#fff 0 25%, #d6d3ce 0 50%) 0 0 / 2px 2px;
  }

  .tray {
    margin-left: auto;
    width: 109px;
    height: 47px;
    display: flex;
    box-sizing: border-box;
    padding: 4px 0 0 2px;
    border: 1px solid;
    border-color: #848284 #fff #fff #848284;
  }

  .tray-icons {
    display: flex;
    flex-wrap: wrap;
    align-content: flex-start;
    gap: 2px 1px;
    width: 34px;
  }

  .clock {
    flex: 1;
    display: flex;
    flex-direction: column;
    text-align: center;
    line-height: 19px;
  }

  /* --- Host panel --- */
  .panel {
    flex: none;
    display: flex;
    align-items: center;
    gap: 3px;
    height: 25px;
    box-sizing: border-box;
    border-top: 1px solid #fff;
    background: repeating-linear-gradient(135deg, #d9d2cb 0 3px, #e0d9d3 3px 6px);
    font: 13px/20px "DejaVu Sans", sans-serif;
  }

  .launchers {
    display: flex;
    align-items: center;
    gap: 3px;
    width: 108px;
    padding-left: 7px;
  }

  .launchers button:nth-child(2) {
    margin-left: 7px;
  }

  .launchers svg {
    width: 20px;
    height: 20px;
  }

  .launchers .large {
    width: 24px;
    height: 24px;
  }

  .launchers .lit {
    background: #fff;
    border-radius: 3px;
  }

  .host-task {
    width: 185px;
    height: 22px;
    display: flex;
    align-items: center;
    gap: 8px;
    padding: 0 6px;
    box-sizing: border-box;
    color: #222;
    background: linear-gradient(#fff, #f4f2f1);
    border: 1px solid #aaa29c;
    border-radius: 4px;
  }

  .host-task svg {
    width: 16px;
    height: 16px;
  }

  .minimized svg {
    opacity: 0.6;
  }

  .applets {
    margin-left: auto;
    display: flex;
    align-items: center;
    color: #222;
  }

  .applets svg {
    width: 22px;
    height: 20px;
  }

  .applets .cpu {
    width: 24px;
  }

  .applets .lock {
    width: 18px;
    margin: 0 5px 0 14px;
  }

  .ghz {
    margin-left: 2px;
  }

  .host-clock {
    margin: 0 4px 0 23px;
  }
</style>
